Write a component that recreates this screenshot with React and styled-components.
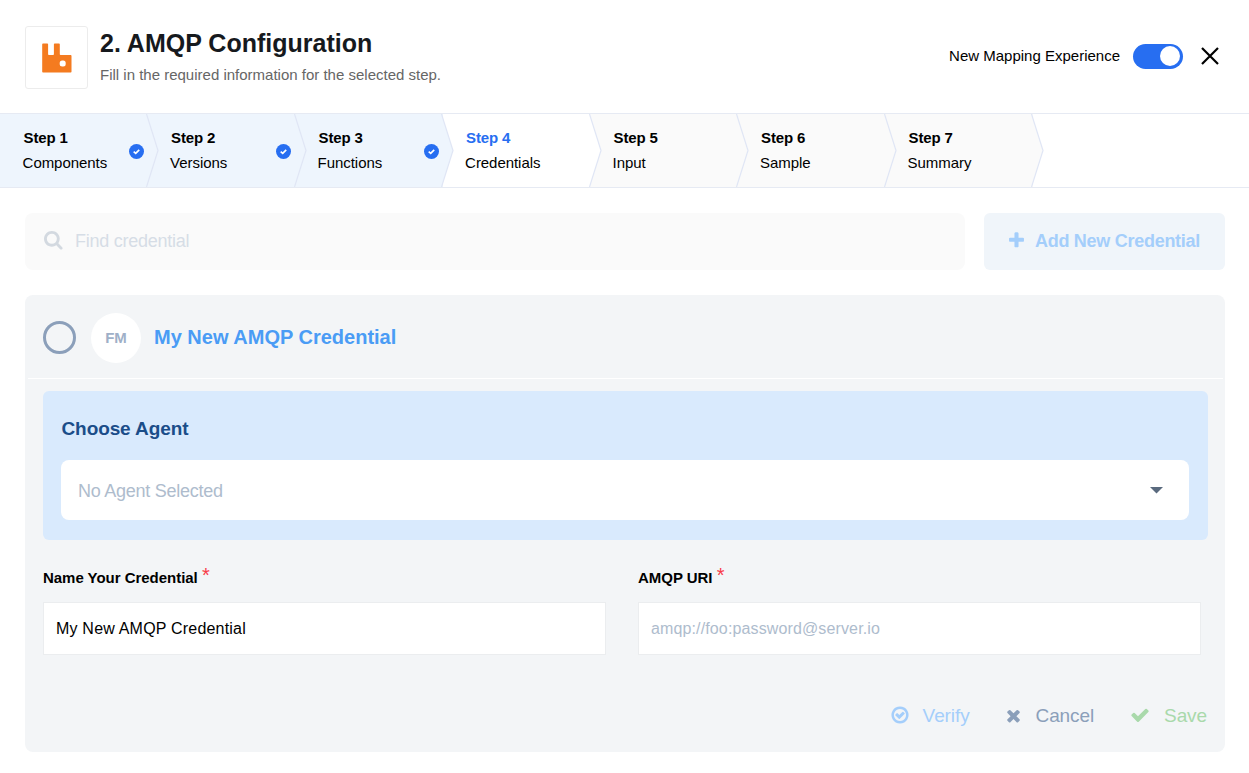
import React from "react";
import styled, { createGlobalStyle } from "styled-components";

const GlobalStyle = createGlobalStyle`
  * { box-sizing: border-box; }
  body {
    margin: 0;
    background: #fff;
    color: #000;
    font-family: "Liberation Sans", Arial, sans-serif;
    font-size: 15px;
  }
  button, input { font-family: inherit; }
`;

const Page = styled.div`
  width: 1249px;
  height: 773px;
  display: flex;
  flex-direction: column;
  overflow: hidden;
`;

const Header = styled.header`
  display: flex;
  align-items: flex-start;
  height: 113px;
  padding: 26px 29px 0 25px;
`;

const LogoBox = styled.div`
  display: flex;
  align-items: center;
  justify-content: center;
  width: 63px;
  height: 63px;
  margin-right: 12px;
  border: 1px solid #ececec;
  border-radius: 3px;
`;

const Heading = styled.div`
  flex: 1;
`;

const Title = styled.h1`
  margin: 0;
  padding-top: 2px;
  font-size: 25px;
  line-height: 30px;
  font-weight: 700;
  color: #16191d;
`;

const Subtitle = styled.p`
  margin: 8px 0 0;
  font-size: 15px;
  line-height: 18px;
  color: #666;
`;

const HeaderTools = styled.div`
  display: flex;
  align-items: center;
  height: 60px;
`;

const ToolLabel = styled.span`
  font-size: 15px;
  margin-right: 13px;
  padding-bottom: 2px;
`;

const Toggle = styled.button`
  display: flex;
  align-items: center;
  justify-content: flex-end;
  width: 50px;
  height: 25px;
  padding: 0 3px;
  margin-right: 17px;
  border: 0;
  border-radius: 13px;
  background: #276ef1;
`;

const Knob = styled.span`
  width: 20px;
  height: 20px;
  border-radius: 50%;
  background: #fff;
`;

const IconButton = styled.button`
  display: flex;
  padding: 0;
  border: 0;
  background: none;
`;

const Stepper = styled.nav`
  display: flex;
  height: 75px;
  border-top: 1px solid #e6eaf3;
  border-bottom: 1px solid #e6eaf3;
`;

const stepFill = { done: "#eef5fd", active: "#ffffff", todo: "#fafafa" };

const StepItem = styled.div`
  position: relative;
  display: flex;
  align-items: center;
  justify-content: space-between;
  width: 147.5px;
  padding: 0 4px 0 22.6px;
  background: ${(p) => stepFill[p.$state]};
`;

const StepText = styled.div`
  position: relative;
  z-index: 2;
`;

const StepName = styled.div`
  font-size: 15px;
  line-height: 23px;
  padding-bottom: 2px;
  font-weight: 700;
  letter-spacing: -0.15px;
  padding-left: 1px;
  color: ${(p) => (p.$active ? "#276ef1" : "#000")};
`;

const StepLabel = styled.div`
  font-size: 15px;
  line-height: 23px;
  padding-bottom: 2px;
  letter-spacing: -0.05px;
`;

const Chevron = styled.svg`
  position: absolute;
  z-index: 1;
  top: 0;
  right: -11.7px;
  color: ${(p) => stepFill[p.$state]};
`;

const Content = styled.main`
  padding: 25px 24px 0 25px;
`;

const SearchRow = styled.div`
  display: flex;
  gap: 19px;
  height: 57px;
`;

const SearchBox = styled.div`
  flex: 1;
  display: flex;
  align-items: center;
  gap: 11.5px;
  padding: 0 18px 2px 18.5px;
  border-radius: 8px;
  background: #fafafa;
  color: #d3d9e0;
`;

const SearchInput = styled.input`
  flex: 1;
  padding: 2px 0 0;
  border: 0;
  outline: 0;
  background: transparent;
  font-size: 18px;
  letter-spacing: -0.25px;
  &::placeholder { color: #d6dde6; opacity: 1; }
`;

const AddButton = styled.button`
  display: flex;
  align-items: center;
  gap: 9px;
  width: 241px;
  padding: 0 0 2px 23px;
  border: 0;
  border-radius: 6px;
  background: #f0f5fa;
  color: #a4cefb;
  font-size: 18px;
  font-weight: 700;
  letter-spacing: -0.28px;
  white-space: nowrap;
`;

const AddLabel = styled.span`
  padding-top: 2px;
`;

const Card = styled.section`
  margin-top: 25px;
  height: 457px;
  border-radius: 8px;
  background: #f3f5f7;
`;

const CardHeader = styled.div`
  display: flex;
  align-items: center;
  height: 84px;
  margin: 0 2px 0 3px;
  padding: 2px 15px 0;
  border-bottom: 1px solid #fff;
`;

const Radio = styled.span`
  width: 33px;
  height: 33px;
  border: 3px solid #8b9fba;
  border-radius: 50%;
`;

const Avatar = styled.span`
  display: flex;
  align-items: center;
  justify-content: center;
  width: 50px;
  height: 50px;
  margin: 0 13px 0 15px;
  border-radius: 50%;
  background: #fff;
  color: #9fb0c8;
  font-size: 15px;
  font-weight: 700;
`;

const CardTitle = styled.h2`
  margin: 0;
  padding-bottom: 1px;
  font-size: 20px;
  font-weight: 700;
  color: #4a9cf5;
`;

const CardBody = styled.div`
  padding: 12px 17px 0 18px;
`;

const AgentPanel = styled.div`
  height: 149px;
  padding: 26px 19px 20px 18px;
  border-radius: 6px;
  background: #d9eafd;
`;

const AgentTitle = styled.h3`
  margin: 0 0 19px;
  padding-left: 0.5px;
  font-size: 19px;
  line-height: 24px;
  font-weight: 700;
  letter-spacing: -0.1px;
  color: #1b4d89;
`;

const AgentSelect = styled.div`
  display: flex;
  align-items: center;
  justify-content: space-between;
  height: 60px;
  padding: 0 26px 0 17px;
  border-radius: 8px;
  background: #fff;
  color: #aebccd;
  font-size: 18px;
  letter-spacing: -0.25px;
`;

const AgentValue = styled.span`
  padding-top: 2px;
`;

const Fields = styled.div`
  display: grid;
  grid-template-columns: 563px 563px;
  gap: 32px;
  margin-top: 26px;
`;

const Field = styled.label`
  display: flex;
  flex-direction: column;
`;

const FieldLabel = styled.span`
  height: 36px;
  line-height: 24px;
  font-size: 15px;
  font-weight: 700;
  letter-spacing: -0.03px;
`;

const Required = styled.span`
  color: #f83a48;
  font-size: 20px;
  font-weight: 400;
  line-height: 16px;
  vertical-align: 1px;
`;

const TextInput = styled.input`
  height: 53px;
  padding: 0 12px;
  border: 1px solid #ebedef;
  outline: 0;
  background: #fff;
  color: #000;
  font-size: 16px;
  letter-spacing: 0.2px;
  &::placeholder { color: #aebccd; opacity: 1; letter-spacing: 0.13px; }
`;

const Actions = styled.div`
  display: flex;
  justify-content: flex-end;
  gap: 34px;
  margin-top: 48px;
  padding-right: 1px;
`;

const tones = { blue: "#a4cefb", slate: "#8b9fba", green: "#a9d9ab" };

const Action = styled.button`
  display: flex;
  align-items: center;
  gap: ${(p) => p.$gap}px;
  padding: 0;
  margin-left: ${(p) => p.$before || 0}px;
  border: 0;
  background: none;
  font-size: 19px;
  line-height: 26px;
  letter-spacing: -0.1px;
  color: ${(p) => tones[p.$tone]};
  svg { margin-bottom: 2px; }
`;

const glyphs = {
  search:
    "M1152 704q0-185-131.5-316.5t-316.5-131.5-316.5 131.5-131.5 316.5 131.5 316.5 316.5 131.5 316.5-131.5 131.5-316.5zm512 832q0 52-38 90t-90 38q-54 0-90-38l-343-342q-179 124-399 124-143 0-273.5-55.5t-225-150-150-225-55.5-273.5 55.5-273.5 150-225 225-150 273.5-55.5 273.5 55.5 225 150 150 225 55.5 273.5q0 220-124 399l343 343q37 37 37 90z",
  plus:
    "M1600 736v192q0 40-28 68t-68 28h-416v416q0 40-28 68t-68 28h-192q-40 0-68-28t-28-68v-416h-416q-40 0-68-28t-28-68v-192q0-40 28-68t68-28h416v-416q0-40 28-68t68-28h192q40 0 68 28t28 68v416h416q40 0 68 28t28 68z",
  times:
    "M1490 1322q0 40-28 68l-136 136q-28 28-68 28t-68-28l-294-294-294 294q-28 28-68 28t-68-28l-136-136q-28-28-28-68t28-68l294-294-294-294q-28-28-28-68t28-68l136-136q28-28 68-28t68 28l294 294 294-294q28-28 68-28t68 28l136 136q28 28 28 68t-28 68l-294 294 294 294q28 28 28 68z",
  check:
    "M1671 566q0 40-28 68l-724 724-136 136q-28 28-68 28t-68-28l-136-136-362-362q-28-28-28-68t28-68l136-136q28-28 68-28t68 28l294 295 656-657q28-28 68-28t68 28l136 136q28 28 28 68z",
  verified:
    "M1299 813l-422 422q-19 19-45 19t-45-19l-294-294q-19-19-19-45t19-45l102-102q19-19 45-19t45 19l147 147 275-275q19-19 45-19t45 19l102 102q19 19 19 45t-19 45zm141 83q0-148-73-273t-198-198-273-73-273 73-198 198-73 273 73 273 198 198 273 73 273-73 198-198 73-273zm224 0q0 209-103 385.5t-279.5 279.5-385.5 103-385.5-103-279.5-279.5-103-385.5 103-385.5 279.5-279.5 385.5-103 385.5 103 279.5 279.5 103 385.5z",
};

function Glyph({ name, size }) {
  return (
    <svg width={size} height={size} viewBox="0 0 1792 1792" fill="currentColor">
      <path d={glyphs[name]} />
    </svg>
  );
}

const BadgeIcon = styled.svg`
  position: relative;
  z-index: 2;
  margin-top: 1px;
`;

function DoneBadge() {
  return (
    <BadgeIcon width="15" height="15" viewBox="0 0 15 15">
      <circle cx="7.5" cy="7.5" r="7.5" fill="#276ef1" />
      <path d="M4.7 7.6 6.7 9.3 10.2 5.8" fill="none" stroke="#fff" strokeWidth="1.7" />
    </BadgeIcon>
  );
}

function Step({ number, label, state }) {
  return (
    <StepItem $state={state}>
      <StepText>
        <StepName $active={state === "active"}>Step {number}</StepName>
        <StepLabel>{label}</StepLabel>
      </StepText>
      {state === "done" && <DoneBadge />}
      <Chevron $state={state} width="14" height="73" viewBox="0 0 14 73">
        <path d="M0 0H1.5L13 36.5 1.5 73H0Z" fill="currentColor" />
        <path d="M1.5 0 13 36.5 1.5 73" fill="none" stroke="#e0e6f5" strokeWidth="1.2" />
      </Chevron>
    </StepItem>
  );
}

const steps = [
  ["Components", "done"],
  ["Versions", "done"],
  ["Functions", "done"],
  ["Credentials", "active"],
  ["Input", "todo"],
  ["Sample", "todo"],
  ["Summary", "todo"],
];

export default function App() {
  return (
    <Page>
      <GlobalStyle />
      <Header>
        <LogoBox>
          <svg width="30" height="30" viewBox="0 0 30 30">
            <path
              fill="#f47b20"
              fillRule="evenodd"
              d="M1 0.500H5.300a.8.8 0 0 1 .8.8V11.300a.8.8 0 0 0 .8.8H11.100a.8.8 0 0 0 .8-.8V1.300a.8.8 0 0 1 .8-.8H17a.8.8 0 0 1 .8.8V11.300a.8.8 0 0 0 .8.800H28.700a.8.8 0 0 1 .8.8V28.700a.8.8 0 0 1-.8.8H1a.8.8 0 0 1-.8-.8V1.300a.8.8 0 0 1 .8-.8ZM20.200 17.500a2.500 2.500 0 0 0-2.500 2.500v1a2.500 2.500 0 0 0 2.500 2.500h1a2.500 2.500 0 0 0 2.500-2.500v-1a2.500 2.500 0 0 0-2.500-2.500Z"
            />
          </svg>
        </LogoBox>
        <Heading>
          <Title>2. AMQP Configuration</Title>
          <Subtitle>Fill in the required information for the selected step.</Subtitle>
        </Heading>
        <HeaderTools>
          <ToolLabel>New Mapping Experience</ToolLabel>
          <Toggle role="switch" aria-checked="true" aria-label="New Mapping Experience">
            <Knob />
          </Toggle>
          <IconButton aria-label="Close">
            <svg width="20" height="20" viewBox="0 0 20 20">
              <path d="M2 2 18 18M18 2 2 18" stroke="#000" strokeWidth="2.2" />
            </svg>
          </IconButton>
        </HeaderTools>
      </Header>
      <Stepper>
        {steps.map(([label, state], i) => (
          <Step key={label} number={i + 1} label={label} state={state} />
        ))}
      </Stepper>
      <Content>
        <SearchRow>
          <SearchBox>
            <Glyph name="search" size={20} />
            <SearchInput placeholder="Find credential" />
          </SearchBox>
          <AddButton>
            <Glyph name="plus" size={19} />
            <AddLabel>Add New Credential</AddLabel>
          </AddButton>
        </SearchRow>
        <Card>
          <CardHeader>
            <Radio />
            <Avatar>FM</Avatar>
            <CardTitle>My New AMQP Credential</CardTitle>
          </CardHeader>
          <CardBody>
            <AgentPanel>
              <AgentTitle>Choose Agent</AgentTitle>
              <AgentSelect>
                <AgentValue>No Agent Selected</AgentValue>
                <svg width="13" height="7" viewBox="0 0 13 7">
                  <path d="M0 0H13L6.500 6.500Z" fill="#5a6a7e" />
                </svg>
              </AgentSelect>
            </AgentPanel>
            <Fields>
              <Field>
                <FieldLabel>
                  Name Your Credential <Required>*</Required>
                </FieldLabel>
                <TextInput defaultValue="My New AMQP Credential" />
              </Field>
              <Field>
                <FieldLabel>
                  AMQP URI <Required>*</Required>
                </FieldLabel>
                <TextInput placeholder="amqp://foo:password@server.io" />
              </Field>
            </Fields>
            <Actions>
              <Action $tone="blue" $gap={12.5}>
                <Glyph name="verified" size={20} />
                Verify
              </Action>
              <Action $tone="slate" $gap={13}>
                <Glyph name="times" size={19} />
                Cancel
              </Action>
              <Action $tone="green" $gap={14} $before={2}>
                <Glyph name="check" size={20} />
                Save
              </Action>
            </Actions>
          </CardBody>
        </Card>
      </Content>
    </Page>
  );
}
